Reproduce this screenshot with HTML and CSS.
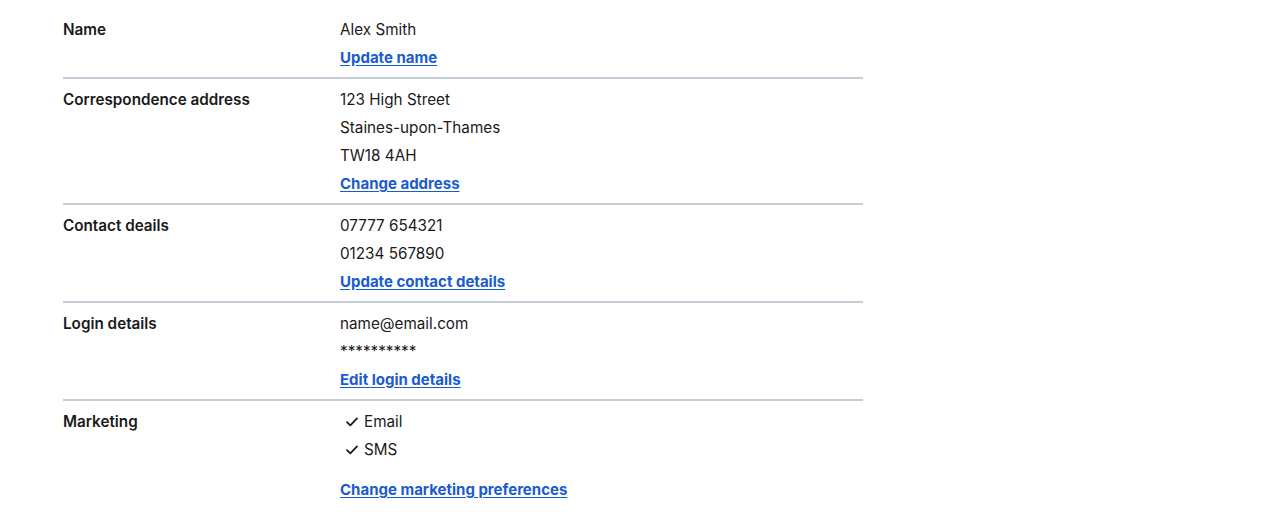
FILE: index.html
```html
<!DOCTYPE html>
<html lang="en">
<head>
<meta charset="utf-8">
<title>Account details</title>
<link rel="stylesheet" href="styles.css">
</head>
<body>
<dl class="summary">
  <div class="row">
    <dt class="key">Name</dt>
    <dd class="value">
      <p class="line">Alex Smith</p>
      <a class="link" href="#">Update name</a>
    </dd>
  </div>
  <div class="row">
    <dt class="key">Correspondence address</dt>
    <dd class="value">
      <p class="line">123 High Street</p>
      <p class="line">Staines-upon-Thames</p>
      <p class="line">TW18 4AH</p>
      <a class="link" href="#">Change address</a>
    </dd>
  </div>
  <div class="row">
    <dt class="key">Contact deails</dt>
    <dd class="value">
      <p class="line">07777 654321</p>
      <p class="line">01234 567890</p>
      <a class="link" href="#">Update contact details</a>
    </dd>
  </div>
  <div class="row">
    <dt class="key">Login details</dt>
    <dd class="value">
      <p class="line">name@email.com</p>
      <p class="line">**********</p>
      <a class="link" href="#">Edit login details</a>
    </dd>
  </div>
  <div class="row row-last">
    <dt class="key">Marketing</dt>
    <dd class="value">
      <ul class="checks">
        <li class="check"><svg class="tick" viewBox="0 0 12 10" width="12" height="10" aria-hidden="true"><path d="M1 5.2 L4.3 8.4 L11 1.4" fill="none" stroke="#1a1a1a" stroke-width="1.8" stroke-linecap="round" stroke-linejoin="round"/></svg>Email</li>
        <li class="check"><svg class="tick" viewBox="0 0 12 10" width="12" height="10" aria-hidden="true"><path d="M1 5.2 L4.3 8.4 L11 1.4" fill="none" stroke="#1a1a1a" stroke-width="1.8" stroke-linecap="round" stroke-linejoin="round"/></svg>SMS</li>
      </ul>
      <a class="link" href="#">Change marketing preferences</a>
    </dd>
  </div>
</dl>
</body>
</html>
```
FILE: styles.css
```css
html, body {
  margin: 0;
  padding: 0;
  background: #ffffff;
}
body {
  font-family: Inter, "Noto Sans", sans-serif;
  font-size: 15.25px;
  line-height: 28px;
  color: #1a1a1a;
  padding: 15px 0 0 63px;
}
.summary {
  margin: 0;
  width: 800px;
}
.row {
  display: grid;
  grid-template-columns: 277px 1fr;
  padding: 1px 0 5px 0;
  margin-bottom: 6px;
  border-bottom: 2px solid #c4ced8;
}
.row-last {
  border-bottom: none;
}
.key {
  margin: 0;
  font-weight: 600;
}
.value {
  margin: 0;
  display: flex;
  flex-direction: column;
  align-items: flex-start;
}
.line {
  margin: 0;
}
.link {
  color: #1a5bd0;
  font-size: 15px;
  font-weight: 700;
  text-decoration: underline;
  text-underline-offset: 2px;
}
.checks {
  list-style: none;
  margin: 0 0 12px 0;
  padding: 0;
}
.check {
  display: flex;
  align-items: center;
  gap: 6px;
  padding-left: 6px;
}
.tick {
  display: block;
}
```
